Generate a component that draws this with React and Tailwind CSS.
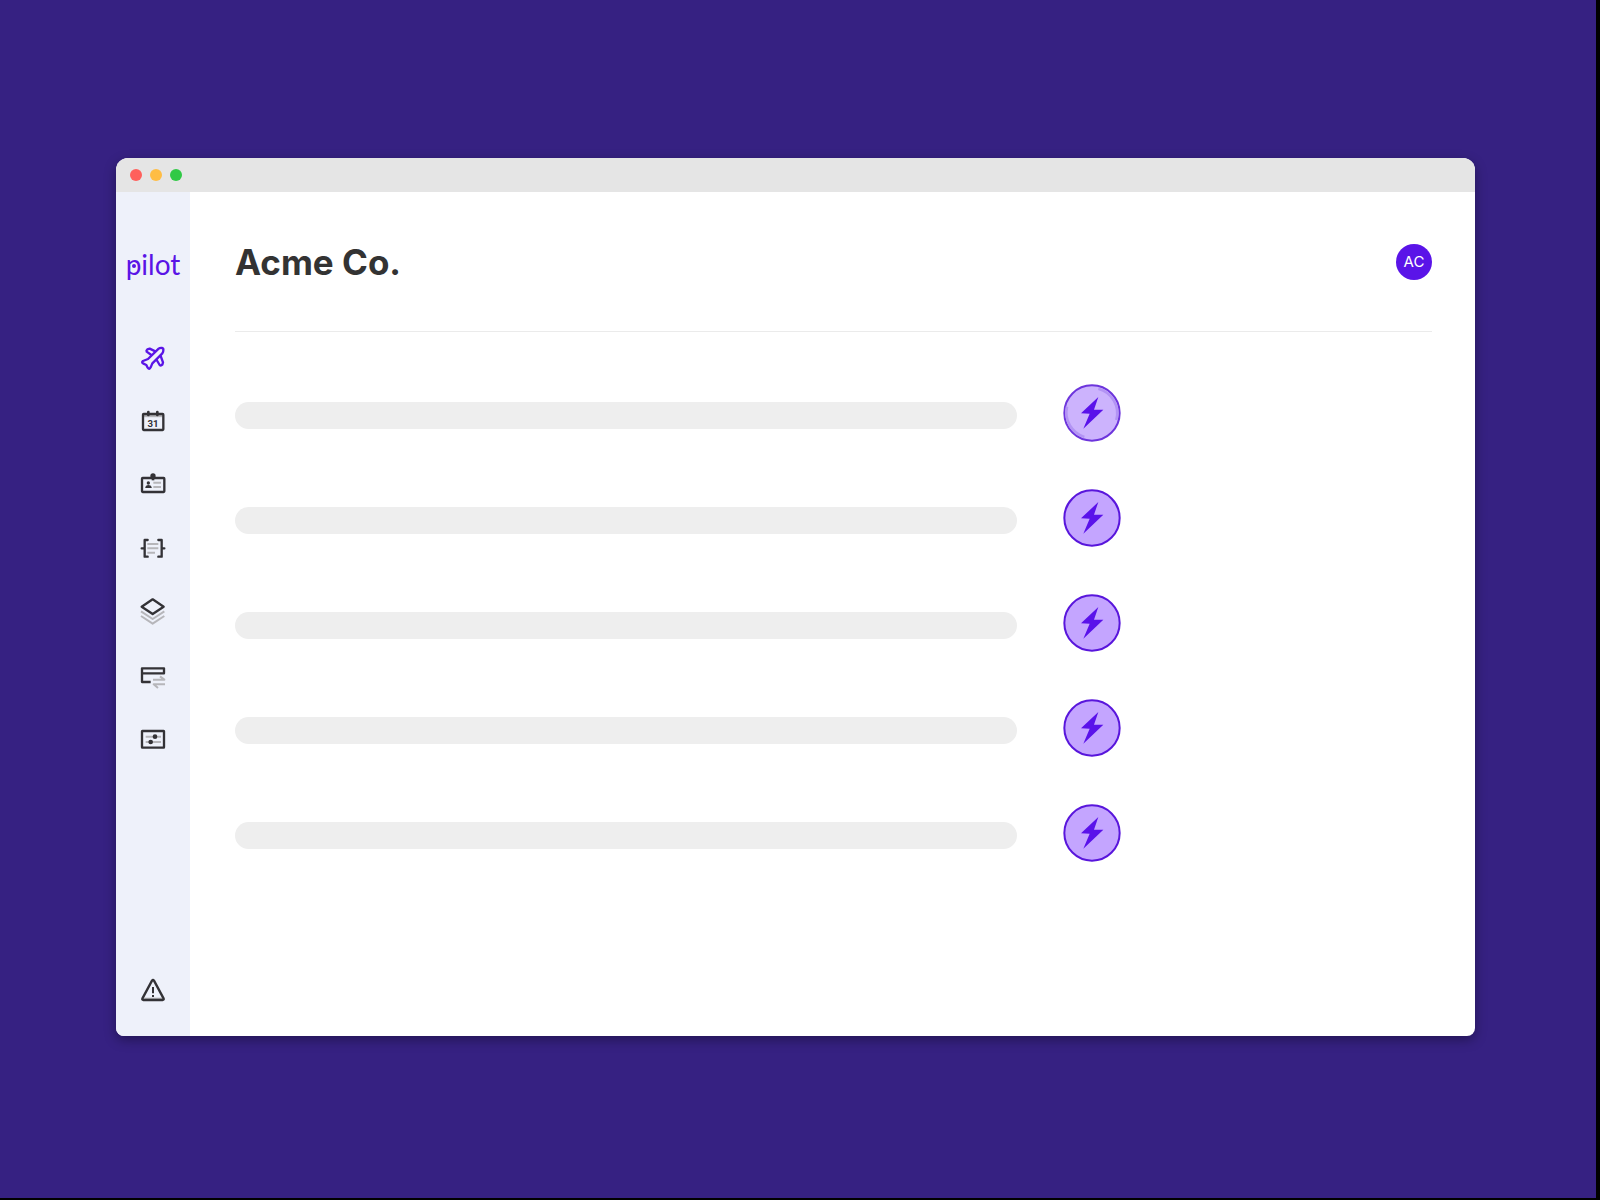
const purple = '#5a14e6';
const dark = '#333236';
const soft = '#b6b6ba';

function Icon({ children }) {
  return (
    <svg viewBox="0 0 96 96" className="size-8" fill="none" strokeLinejoin="round" aria-hidden="true">
      {children}
    </svg>
  );
}

const navItems = [
  {
    label: 'Home',
    icon: (
      <Icon>
        <path
          stroke={purple}
          strokeWidth="7"
          strokeLinecap="round"
          d="M43 45 L29 35 Q27 31 31 28 L38 26 L55 34 M59 60 L68 75 Q72 78 76 74 L78 67 L71 48"
        />
        <path
          stroke={purple}
          strokeWidth="7"
          d="M65 26 Q69 23 75 24 Q80 25 79 31 Q79 36 76 40 L46 70 L41 82 Q37 90 32 83 L28 75 L18 70 Q13 67 18 63 L33 57 Z"
        />
      </Icon>
    ),
  },
  {
    label: 'Calendar',
    icon: (
      <Icon>
        <path stroke={soft} strokeWidth="7" d="M20 36 H76" />
        <rect x="18" y="30" width="61" height="48" rx="2" stroke={dark} strokeWidth="7" />
        <path stroke={dark} strokeWidth="8" strokeLinecap="round" d="M34 24 V33 M61 24 V33" />
        <text x="48" y="68" textAnchor="middle" fontSize="29" fontWeight="700" fontFamily="Roboto, sans-serif" fill={dark}>
          31
        </text>
      </Icon>
    ),
  },
  {
    label: 'Contacts',
    icon: (
      <Icon>
        <rect x="15" y="30" width="67" height="42" rx="2" stroke={dark} strokeWidth="7" />
        <circle cx="48" cy="24" r="8" fill={dark} />
        <path stroke={dark} strokeWidth="8" d="M48 24 V37" />
        <circle cx="34" cy="45" r="5" fill={dark} />
        <path fill={dark} d="M25 60 V57 Q27 51 34 51 Q42 51 44 57 V60 Z" />
        <path stroke={soft} strokeWidth="6" d="M49 44 H72 M49 57 H72" />
      </Icon>
    ),
  },
  {
    label: 'Rules',
    icon: (
      <Icon>
        <path
          stroke={dark}
          strokeWidth="7"
          strokeLinecap="round"
          d="M32 24 H23 V74 H32 M64 24 H74 V74 H64 M14 49 H23 M74 49 H82"
        />
        <path stroke={soft} strokeWidth="6" d="M31 36 H64 M31 49 H64 M31 62 H54" />
      </Icon>
    ),
  },
  {
    label: 'Layers',
    icon: (
      <Icon>
        <path stroke={soft} strokeWidth="6" d="M12 46 L47 69 L82 46 M12 60 L47 83 L82 60" />
        <path stroke={dark} strokeWidth="7" d="M47 10 L80 32 L47 54 L14 32 Z" />
      </Icon>
    ),
  },
  {
    label: 'Transactions',
    icon: (
      <Icon>
        <path stroke={dark} strokeWidth="7" d="M41 66 H15 V25 H81 V40 H15" />
        <path stroke={soft} strokeWidth="6" d="M48 59 H82 L69 49 M84 73 H50 L63 84" />
      </Icon>
    ),
  },
  {
    label: 'Settings',
    icon: (
      <Icon>
        <rect x="15" y="21" width="66" height="50" rx="1" stroke={dark} strokeWidth="7" />
        <path stroke={soft} strokeWidth="6" d="M26 38 H72 M26 54 H72" />
        <circle cx="54" cy="38" r="7" fill={dark} />
        <circle cx="41" cy="54" r="7" fill={dark} />
      </Icon>
    ),
  },
];

function Logo() {
  return (
    <div className="relative font-['Lato'] text-[28px] leading-9 text-[#5a14e6]">
      pilot
      <span className="absolute top-[18px] left-[6px] size-1 rounded-full bg-[#5a14e6]" />
    </div>
  );
}

function Bolt({ active }) {
  return (
    <svg viewBox="0 0 174 174" className="size-[58px]" aria-hidden="true">
      <circle cx="87" cy="87" r="83" fill={active ? '#ccb3fd' : '#c4a5ff'} stroke={active ? '#6d35dc' : '#5916dc'} strokeWidth="6" />
      {active && (
        <path
          d="M106 14 A76 76 0 0 1 160 108 M12 68 A77 77 0 0 0 64 159"
          fill="none"
          stroke="#b394f4"
          strokeWidth="8"
        />
      )}
      <path fill="#5a12ea" d="M106 39 L54 88 L80 89 L61 134 L121 77 L93 77 Z" />
    </svg>
  );
}

const rows = [1, 2, 3, 4, 5];

export default function App() {
  return (
    <div className="flex min-h-screen bg-black pr-1 pb-0.5">
      <div className="flex flex-1 bg-[#362182] pt-[158px] pr-[121px] pb-[162px] pl-[116px]">
        <div className="flex flex-1 flex-col overflow-hidden rounded-t-xl rounded-b-lg bg-white shadow-[0_4px_12px_rgba(0,0,0,0.35)]">
          <div className="flex h-[34px] shrink-0 items-center gap-2 bg-[#e5e5e5] px-3.5">
            <button aria-label="Close" className="size-3 rounded-full bg-[#ff605c]" />
            <button aria-label="Minimize" className="size-3 rounded-full bg-[#ffbd44]" />
            <button aria-label="Maximize" className="size-3 rounded-full bg-[#30c945]" />
          </div>
          <div className="flex flex-1">
            <aside className="flex w-[74px] shrink-0 flex-col items-center bg-[#eef1fa] pt-[54px] pb-[30px]">
              <Logo />
              <nav className="flex flex-col gap-8 pt-[58px]">
                {navItems.map((item) => (
                  <a key={item.label} href="#" aria-label={item.label}>
                    {item.icon}
                  </a>
                ))}
              </nav>
              <a href="#" aria-label="Alerts" className="mt-auto">
                <Icon>
                  <path stroke={soft} strokeWidth="4" d="M22 73 H75" />
                  <path stroke={dark} strokeWidth="7" d="M45 20 Q48 16 51 20 L80 74 Q81 78 77 78 H19 Q15 78 16 74 Z" />
                  <path stroke={dark} strokeWidth="6" d="M48 39 V58 M48 63 V69" />
                </Icon>
              </a>
            </aside>
            <main className="flex-1 pr-[43px] pl-[45px]">
              <header className="flex items-center justify-between border-b border-[#ebebeb] pt-[52px] pb-[51px]">
                <h1 className="font-['Inter'] text-[35px] leading-9 font-bold text-[#333333]">Acme Co.</h1>
                <button className="flex size-9 shrink-0 items-center justify-center rounded-full bg-[#5a14e8] font-['Inter'] text-[15px] text-white">
                  AC
                </button>
              </header>
              <ul className="flex flex-col gap-[47px] pt-[52px]">
                {rows.map((row) => (
                  <li key={row} className="flex items-start gap-[46px]">
                    <div className="mt-[18px] h-[27px] w-[65.3%] rounded-full bg-[#eeeeee]" />
                    <button aria-label={`Run task ${row}`} className="rounded-full">
                      <Bolt active={row === 1} />
                    </button>
                  </li>
                ))}
              </ul>
            </main>
          </div>
        </div>
      </div>
    </div>
  );
}
